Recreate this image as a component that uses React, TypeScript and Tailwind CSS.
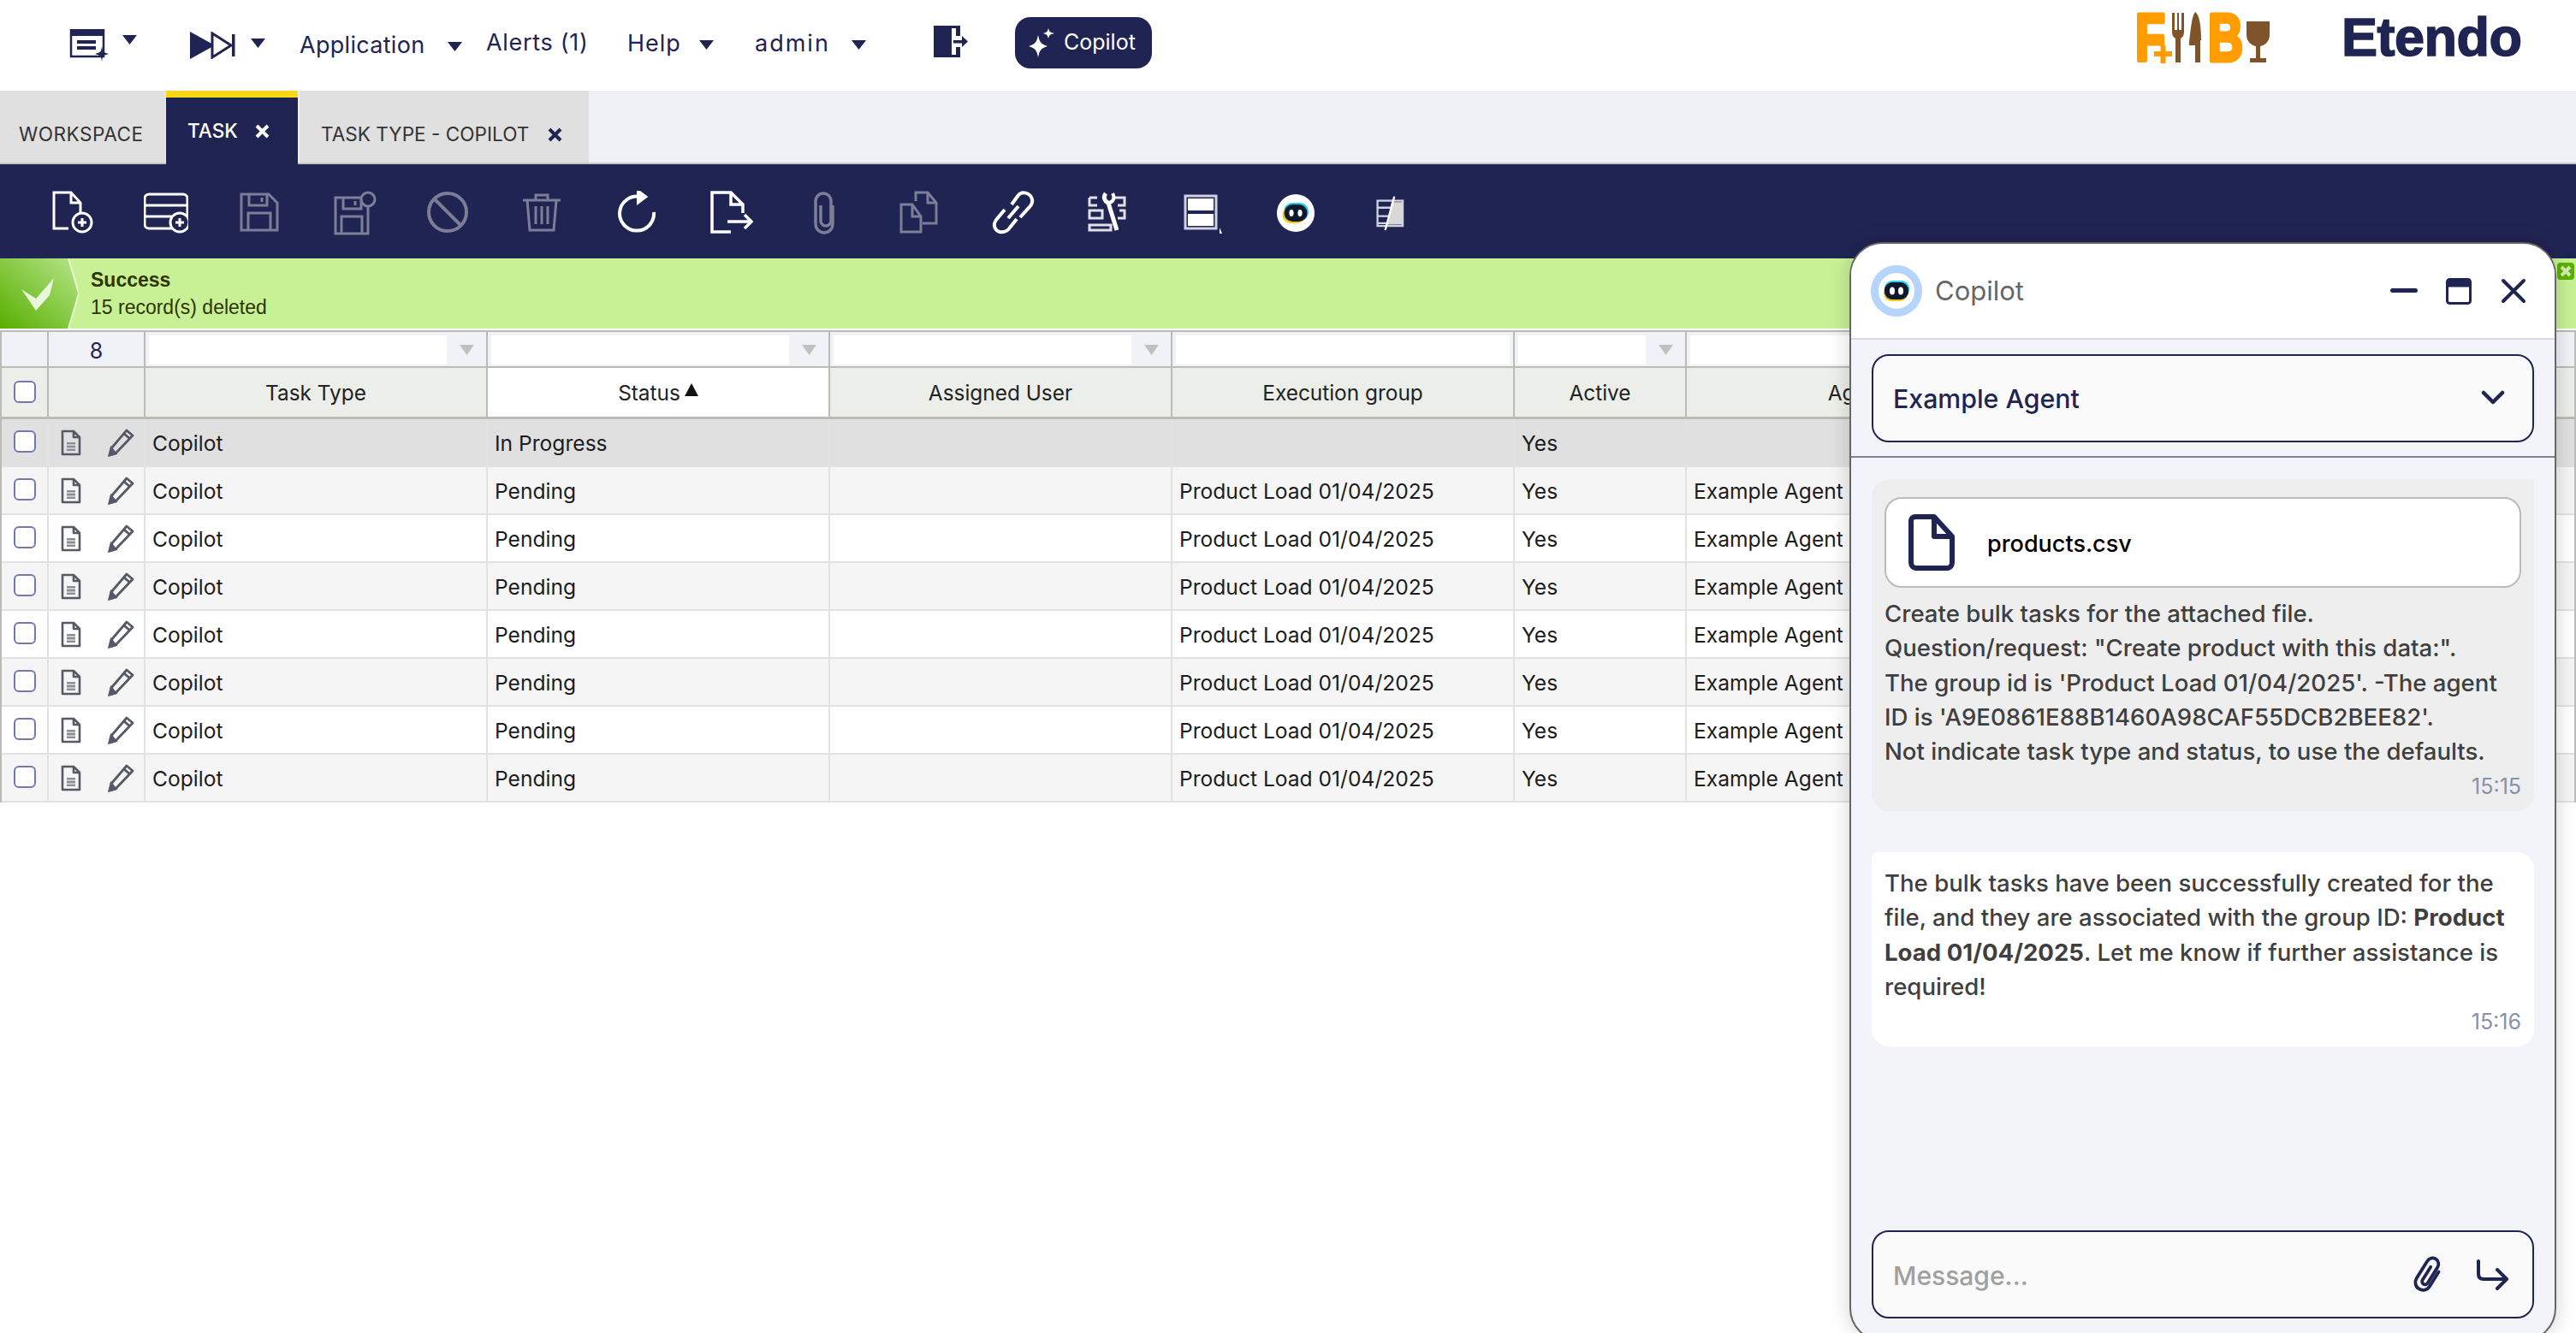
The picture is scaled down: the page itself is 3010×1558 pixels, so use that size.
import React from "react";

const Tri = ({ className = "" }: { className?: string }) => (
  <svg width="17" height="11" viewBox="0 0 17 11" className={className}>
    <path d="M0 0H17L8.5 11Z" fill="#202452" />
  </svg>
);

const Robot = ({ size }: { size: number }) => (
  <svg width={size} height={size} viewBox="0 0 44 44">
    <circle cx="22" cy="22" r="22" fill="#fff" />
    <rect x="8" y="10" width="29" height="21" rx="10" fill="#1fc8ea" />
    <rect x="6.5" y="14" width="27" height="20" rx="10" fill="#f5c518" />
    <rect x="8.5" y="12" width="27" height="20" rx="10" fill="#10182b" />
    <ellipse cx="17" cy="22" rx="2.6" ry="4" fill="#fff" />
    <ellipse cx="27" cy="22" rx="2.6" ry="4" fill="#fff" />
  </svg>
);

const Circ = ({ x, y, r = 11 }: { x: number; y: number; r?: number }) => (
  <g>
    <circle cx={x} cy={y} r={r} fill="#202452" />
    <path d={`M${x} ${y - 5}V${y + 5}M${x - 5} ${y}H${x + 5}`} />
  </g>
);

const toolbar: { dim?: boolean; el: React.ReactNode }[] = [
  { el: <g><path d="M22 44H5V2H25L36 14V26M25 2V14H36" /><Circ x={38} y={37} /></g> },
  { el: <g><rect x="1" y="4" width="50" height="40" rx="5" /><path d="M1 17H51M1 30H51" /><Circ x={42} y={37} /></g> },
  { dim: true, el: <g><path d="M4 4H36L46 14V46H4ZM13 4V17H34V4M28 8V13M12 46V26H38V46" /></g> },
  { dim: true, el: <g><path d="M4 8H36L42 14V50H4ZM13 8V21H34V8M27 12V17M11 50V30H35V50" /><circle cx="42" cy="10" r="8" fill="#202452" /></g> },
  { dim: true, el: <g strokeWidth={4}><circle cx="25" cy="25" r="22" /><path d="M10 10L40 40" /></g> },
  { dim: true, el: <g><path d="M3 11H47M18 11V5H32V11M8 11L11 46H39L42 11M18 18V39M25 18V39M32 18V39" /></g> },
  { el: <g strokeWidth={4}><path d="M30 7A20 20 0 1 0 46 25" /><path d="M28 1L36 7L28 13Z" fill="#fff" /></g> },
  { el: <g strokeWidth={3.5}><path d="M26 48H4V2H26L40 16V26M26 2V16H40" /><path d="M22 36H50M42 28L50 36L42 44" /></g> },
  { dim: true, el: <g strokeWidth={3.5}><path d="M36 16V38A10 10 0 0 1 16 38V11A8 8 0 0 1 34 11V34A5 5 0 0 1 22 34V16" transform="translate(-1 1)" /></g> },
  { dim: true, el: <g><path d="M18 16H5V48H28V30L18 16ZM18 16V30H28" /><path d="M22 12V2H36L46 14V38H30M36 2V14H46" /></g> },
  { el: <g strokeWidth={4}><path d="M24 16L32 5C36 0 46 2 48 10C49 14 46 18 44 20L34 31" /><path d="M16 22L6 34C2 40 4 46 10 48C16 49 20 46 22 43L30 33" /><path d="M20 32L32 18" /></g> },
  { el: <g stroke="#dfe0ea"><path d="M5 8H14M5 8V17H14M5 23H20V32H5ZM5 40H30V46H5ZM34 8H46V17H38M40 23H46V32H38" /><path d="M24 3C20 8 24 13 27 14L37 46" strokeWidth={5} stroke="#fff" /><path d="M32 3C35 8 33 13 28 14" strokeWidth={4} stroke="#fff" /></g> },
  { el: <g><rect x="7" y="6" width="36" height="38" stroke="#d0d2e0" strokeWidth={3} /><rect x="10" y="9" width="30" height="14" fill="#fff" stroke="none" /><rect x="10" y="27" width="30" height="14" fill="#fff" stroke="none" /><path d="M47 50V43L50 50Z" fill="#fff" stroke="none" /></g> },
  { el: null },
  { el: <g transform="translate(5 5) scale(0.82)" strokeWidth={2.8} stroke="#d0d2e0"><rect x="8" y="8" width="36" height="36" /><path d="M8 18H44M8 30H44M8 40H28" /><path d="M28 10H44V42H22Z" fill="#d8d8d8" stroke="none" /><path d="M32 2L19 50" stroke="#fff" strokeWidth={2.8} /></g> },
];

const cols = "grid grid-cols-[55px_113px_400px_400px_400px_400px_201px_400px_1fr]";

const FilterCell = ({ arrow }: { arrow?: boolean }) => (
  <div className="flex items-center border-r-2 border-[#bcbcb6] pl-[4px]">
    <div className="h-[34px] flex-1 bg-white" />
    {arrow ? (
      <div className="flex w-[46px] justify-center">
        <svg width="17" height="12" viewBox="0 0 17 12"><path d="M0 0H17L8.5 12Z" fill="#c0c0c0" /></svg>
      </div>
    ) : (
      <div className="w-[4px]" />
    )}
  </div>
);

const Head = ({ label, sorted }: { label: string; sorted?: boolean }) => (
  <div className={`flex items-center justify-center border-r-2 border-[#bcbcb6] pt-[2px] text-[24.4px] text-[#222] ${sorted ? "bg-white" : "bg-[#eceee9]"}`}>
    <span>{label}</span>
    {sorted && (
      <svg width="16" height="15" viewBox="0 0 16 15" className="mb-[8px] ml-[5px]"><path d="M8 0L16 15H0Z" fill="#111" /></svg>
    )}
  </div>
);

const Check = () => (
  <div className="h-[26px] w-[26px] rounded-[6px] border-2 border-[#7478b0] bg-white" />
);

const Row = ({ status, group, agent, bg }: { status: string; group: string; agent: string; bg: string }) => (
  <div className={`${cols} h-[56px] border-b-2 border-[#e2e2e2] text-[24.6px] text-[#1c1c1c] ${bg}`}>
    <div className="flex items-center justify-center border-r-2 border-[#e2e2e2] pb-[2px]"><Check /></div>
    <div className="flex items-center gap-[31px] border-r-2 border-[#e2e2e2] pl-[14px]">
      <svg width="24" height="31" viewBox="0 0 24 31" fill="none" stroke="#555a66" strokeWidth="2.6" strokeLinejoin="round">
        <path d="M2 2H15L22 9V29H2ZM15 2V9H22" />
        <path d="M7 15H17V25H7Z" fill="#8a8d98" stroke="none" />
        <path d="M7 18H17M7 22H17" stroke="#fff" strokeWidth="1" />
      </svg>
      <svg width="31" height="33" viewBox="0 0 31 33" fill="none" stroke="#555a66" strokeWidth="2.8">
        <path d="M22 2L29 8L9 29L2 31L4 23ZM19 6L26 12" strokeLinejoin="round" />
        <path d="M4 23L9 29L2 31Z" fill="#555a66" />
      </svg>
    </div>
    <div className="flex items-center border-r-2 border-[#e2e2e2] pt-[2px] pl-[8px]">Copilot</div>
    <div className="flex items-center border-r-2 border-[#e2e2e2] pt-[2px] pl-[8px]">{status}</div>
    <div className="border-r-2 border-[#e2e2e2]" />
    <div className="flex items-center border-r-2 border-[#e2e2e2] pt-[2px] pl-[8px]">{group}</div>
    <div className="flex items-center border-r-2 border-[#e2e2e2] pt-[2px] pl-[8px]">Yes</div>
    <div className="flex items-center border-r-2 border-[#e2e2e2] pt-[2px] pl-[8px]">{agent}</div>
    <div />
  </div>
);

const Avatar = () => (
  <div className="flex h-[60px] w-[60px] items-center justify-center rounded-full border-[9px] border-[#b5d4fe] bg-white">
    <svg width="30" height="24" viewBox="0 0 30 24">
      <rect x="1" y="0" width="29" height="20" rx="9" fill="#22d3ee" />
      <rect x="0" y="4" width="28" height="20" rx="9" fill="#f5c518" />
      <rect x="1" y="2" width="28" height="20" rx="9" fill="#10182b" />
      <ellipse cx="10" cy="12" rx="3" ry="4.5" fill="#fff" />
      <ellipse cx="20" cy="12" rx="3" ry="4.5" fill="#fff" />
    </svg>
  </div>
);

export default function App() {
  const pending = Array.from({ length: 7 });
  return (
    <div className="relative h-[1558px] w-[3010px] overflow-hidden bg-white font-['Inter',sans-serif]">
      {/* top bar */}
      <div className="flex h-[106px] items-center text-[27px] text-[#202452]">
        <svg width="46" height="38" viewBox="0 0 46 38" className="ml-[81px]">
          <path d="M2 1H40V32H2Z" fill="#fff" stroke="#202452" strokeWidth="2.5" />
          <rect x="1" y="0" width="40" height="8" fill="#202452" />
          <path d="M9 15H31M9 22H31" stroke="#202452" strokeWidth="4" />
          <path d="M38 20C39 27 39 27 46 29C39 31 39 31 38 38C37 31 37 31 30 29C37 27 37 27 38 20Z" fill="#202452" />
        </svg>
        <Tri className="-mt-[14px] ml-[16px]" />
        <svg width="53" height="32" viewBox="0 0 53 32" className="ml-[62px]">
          <path d="M0 0L29 16L0 32Z" fill="#202452" />
          <path d="M26 2L48 16L26 30Z" fill="#fff" stroke="#202452" strokeWidth="3" />
          <rect x="49" y="3" width="3.5" height="26" fill="#202452" />
        </svg>
        <Tri className="-mt-[6px] ml-[18px]" />
        <span className="ml-[40px] w-[146px] tracking-[0.3px]">Application</span>
        <Tri className="mt-[2px] ml-[27px]" />
        <span className="-mt-[5px] ml-[28px] w-[119px] whitespace-nowrap tracking-[0.7px]">Alerts (1)</span>
        <span className="-mt-[4px] ml-[46px] w-[62px] tracking-[1px]">Help</span>
        <Tri className="-mt-[2px] ml-[22px]" />
        <span className="-mt-[4px] ml-[48px] w-[91px] tracking-[2px]">admin</span>
        <Tri className="-mt-[2px] ml-[22px]" />
        <svg width="40" height="38" viewBox="0 0 40 38" className="-mt-[8px] ml-[79px]">
          <rect x="0" y="0" width="21" height="37" fill="#202452" />
          <rect x="0" y="0" width="31" height="3" fill="#202452" />
          <rect x="0" y="34" width="31" height="3" fill="#202452" />
          <rect x="26" y="0" width="5" height="12" fill="#202452" />
          <rect x="26" y="25" width="5" height="12" fill="#202452" />
          <rect x="21" y="16" width="12" height="5" fill="#fff" />
          <rect x="23" y="17" width="10" height="3.5" fill="#202452" />
          <path d="M33 12L40 18.5L33 25Z" fill="#202452" />
        </svg>
        <div className="-mt-[6px] ml-[55px] flex h-[60px] w-[160px] items-center rounded-[18px] bg-[#202452] pl-[16px] text-[25px] text-white">
          <svg width="30" height="34" viewBox="0 0 30 34" className="shrink-0">
            <path d="M11 8C13 17 14 18 22 21C14 24 13 25 11 34C9 25 8 24 0 21C8 18 9 17 11 8Z" fill="#fff" />
            <path d="M23 0C24 4 25 5 30 6C25 7 24 8 23 12C22 8 21 7 17 6C21 5 22 4 23 0Z" fill="#fff" />
          </svg>
          <span className="ml-[11px]">Copilot</span>
        </div>
        <svg width="160" height="100" viewBox="0 -13 160 100" className="mt-[-6px] ml-[1148px]">
          <text x="1" y="58" fontFamily="Liberation Sans" fontWeight="700" fontSize="78" fill="#ff9d00" stroke="#ff9d00" strokeWidth="5" strokeLinejoin="round" textLength="35" lengthAdjust="spacingAndGlyphs">F</text>
          <path d="M23 50H44M33.5 40V61" stroke="#ff9d00" strokeWidth="6" />
          <path d="M44 2H47V22H50V2H52V22H55V2H58V24C58 30 55 31 54 32V60H48V32C47 31 44 30 44 24Z" fill="#80542a" />
          <path d="M71 1C75 3 78 14 78 34H77V60H71V40H64V36C66 20 67 6 71 1Z" fill="#80542a" />
          <text x="86" y="58" fontFamily="Liberation Sans" fontWeight="700" fontSize="78" fill="#ff9d00" stroke="#ff9d00" strokeWidth="5" strokeLinejoin="round" textLength="41" lengthAdjust="spacingAndGlyphs">B</text>
          <path d="M131 12H158V28C158 36 152 40 147 41V55H154V60H135V55H142V41C137 40 131 36 131 28Z" fill="#80542a" />
        </svg>
        <span className="mt-[-20px] ml-[82px] font-['Liberation_Sans',sans-serif] text-[63px] font-bold tracking-[-0.5px] [-webkit-text-stroke:1.5px_#202452]">Etendo</span>
      </div>

      {/* tabs */}
      <div className="flex h-[86px] border-b-2 border-[#c4c4ca] bg-[#eff0f5] text-[22.6px]">
        <div className="flex w-[193px] items-center bg-[#e0e0e0] pt-[18px] pl-[22px] tracking-[0.5px] text-[#333]">WORKSPACE</div>
        <div className="ml-[1px] flex h-[86px] w-[154px] items-center border-t-[8px] border-[#fdd615] bg-[#202452] pl-[25px] text-white">
          <span className="w-[57px] font-medium">TASK</span>
          <svg width="17" height="17" viewBox="0 0 17 17" className="ml-[22px]"><path d="M2 2L15 15M15 2L2 15" stroke="#fff" strokeWidth="4" /></svg>
        </div>
        <div className="ml-[2px] flex w-[338px] items-center bg-[#e0e0e0] pt-[18px] pl-[25px] whitespace-nowrap text-[#333]">
          <span className="w-[242px]">TASK TYPE - COPILOT</span>
          <svg width="17" height="17" viewBox="0 0 17 17" className="ml-[23px]"><path d="M2 2L15 15M15 2L2 15" stroke="#202452" strokeWidth="4" /></svg>
        </div>
      </div>

      {/* toolbar */}
      <div className="flex h-[110px] items-center bg-[#202452] pt-[4px] pl-[29px]">
        {toolbar.map((t, i) => (
          <div key={i} className="flex w-[110px] justify-center">
            {t.el ? (
              <svg width="52" height="52" viewBox="0 0 52 52" fill="none" strokeWidth="3" stroke={t.dim ? "#7b7e96" : "#fff"}>
                {t.el}
              </svg>
            ) : (
              <Robot size={44} />
            )}
          </div>
        ))}
      </div>

      {/* message */}
      <div className="flex h-[82px] items-stretch bg-[#c8f196]">
        <svg width="92" height="82" viewBox="0 0 92 82" className="shrink-0">
          <defs>
            <linearGradient id="g" x1="0" y1="1" x2="1" y2="0">
              <stop offset="0" stopColor="#58ae00" />
              <stop offset="1" stopColor="#b6e58a" />
            </linearGradient>
          </defs>
          <path d="M0 0H80L92 41L80 82H0Z" fill="url(#g)" />
          <path d="M80 0L92 41L80 82" fill="none" stroke="#e6f7d0" strokeWidth="2" />
          <path d="M25 36L42 47L63 23L58 43L42 61Z" fill="#e9f8da" />
        </svg>
        <div className="ml-[14px] flex flex-col justify-center font-['Liberation_Sans',sans-serif] text-[23px] leading-[32px] text-[#2e3300]">
          <span className="font-bold">Success</span>
          <span>15 record(s) deleted</span>
        </div>
        <div className="ml-auto pt-[5px] pr-[2px]">
          <div className="flex h-[20px] w-[20px] items-center justify-center rounded-[4px] bg-[#5cb000]">
            <svg width="14" height="14" viewBox="0 0 14 14"><path d="M2 2L12 12M12 2L2 12" stroke="#cfeeb0" strokeWidth="4" /></svg>
          </div>
        </div>
      </div>

      {/* grid */}
      <div className="mt-[2px] border-t-2 border-r-2 border-l-2 border-[#bcbcb6]">
        <div className={`${cols} h-[42px] border-b-2 border-[#bcbcb6] bg-[#f1f2f8]`}>
          <div className="border-r-2 border-[#bcbcb6]" />
          <div className="flex items-center justify-center border-r-2 border-[#bcbcb6] pt-[4px] text-[25px] text-[#202452]">8</div>
          <FilterCell arrow />
          <FilterCell arrow />
          <FilterCell arrow />
          <FilterCell />
          <FilterCell arrow />
          <FilterCell />
          <div />
        </div>
        <div className={`${cols} h-[60px] border-b-[3px] border-[#bcbcb6] bg-[#eceee9]`}>
          <div className="flex items-center justify-center border-r-2 border-[#bcbcb6] pb-[2px]"><Check /></div>
          <div className="border-r-2 border-[#bcbcb6]" />
          <Head label="Task Type" />
          <Head label="Status" sorted />
          <Head label="Assigned User" />
          <Head label="Execution group" />
          <Head label="Active" />
          <Head label="Agent" />
          <div />
        </div>
        <Row status="In Progress" group="" agent="" bg="bg-[#e0e0e0]" />
        {pending.map((_, i) => (
          <Row key={i} status="Pending" group="Product Load 01/04/2025" agent="Example Agent" bg={i % 2 === 0 ? "bg-[#f5f5f5]" : "bg-white"} />
        ))}
      </div>

      {/* copilot panel */}
      <div className="absolute top-[283px] left-[2161px] flex h-[1285px] w-[826px] flex-col overflow-hidden rounded-[39px] border-2 border-[#666] bg-[#f3f4f9] shadow-[0_0_24px_rgba(0,0,0,0.18)]">
        <div className="flex h-[112px] shrink-0 items-center border-b-2 border-[#d6d8e4] bg-white pl-[23px]">
          <Avatar />
          <span className="ml-[15px] text-[31px] text-[#666]">Copilot</span>
          <svg width="32" height="6" viewBox="0 0 32 6" className="ml-[auto]"><rect width="32" height="5" rx="2.5" fill="#202452" /></svg>
          <svg width="30" height="31" viewBox="0 0 30 31" className="ml-[33px]">
            <rect x="1.5" y="1.5" width="27" height="28" rx="3" fill="#fff" stroke="#202452" strokeWidth="3" />
            <rect x="1.5" y="1.5" width="27" height="9" fill="#202452" />
          </svg>
          <svg width="30" height="30" viewBox="0 0 30 30" className="mr-[33px] ml-[34px]"><path d="M3 3L27 27M27 3L3 27" stroke="#202452" strokeWidth="4" strokeLinecap="round" /></svg>
        </div>
        <div className="flex h-[138px] shrink-0 items-center border-b-2 border-[#7f8494] pr-[24px] pl-[24px]">
          <div className="flex h-[103px] w-full items-center justify-between rounded-[20px] border-2 border-[#202452] bg-[#fafafa] pr-[32px] pl-[23px]">
            <span className="pt-[3px] text-[30.3px] font-medium text-[#202452]">Example Agent</span>
            <svg width="28" height="18" viewBox="0 0 28 18"><path d="M3 3L14 14L25 3" fill="none" stroke="#202452" strokeWidth="4.5" strokeLinecap="round" strokeLinejoin="round" /></svg>
          </div>
        </div>
        <div className="flex flex-1 flex-col px-[24px] pt-[25px]">
          <div className="h-[388px] rounded-[20px] rounded-tr-none bg-[#eeeeee] px-[15px] pt-[21px] text-[27.6px] leading-[40.3px] font-medium text-[#3f3f3f]">
            <div className="mb-[10px] flex h-[106px] items-center rounded-[20px] border-2 border-[#bbb] bg-white pl-[26px] text-black">
              <svg width="54" height="66" viewBox="0 0 54 66" fill="none" stroke="#202452" strokeWidth="6" strokeLinejoin="round">
                <path d="M8 3H30L51 26V56C51 60 49 63 45 63H9C5 63 3 60 3 56V8C3 5 5 3 8 3Z" />
                <path d="M30 3V26H51" />
              </svg>
              <span className="ml-[38px] pt-[4px] text-[27px]">products.csv</span>
            </div>
            <p>Create bulk tasks for the attached file.</p>
            <p>Question/request: "Create product with this data:".</p>
            <p>The group id is 'Product Load 01/04/2025'. -The agent ID is 'A9E0861E88B1460A98CAF55DCB2BEE82'.</p>
            <p>Not indicate task type and status, to use the defaults.</p>
            <div className="mt-[1px] text-right text-[25px] leading-[40px] font-normal text-[#8a90a8]">15:15</div>
          </div>
          <div className="mt-[48px] h-[227px] rounded-[20px] rounded-tl-[8px] bg-white px-[15px] pt-[16px] text-[27.6px] leading-[40.3px] font-medium text-[#3f3f3f]">
            <p>The bulk tasks have been successfully created for the file, and they are associated with the group ID: <b className="font-bold">Product Load 01/04/2025</b>. Let me know if further assistance is required!</p>
            <div className="mt-[1px] text-right text-[25px] leading-[40px] font-normal text-[#8a90a8]">15:16</div>
          </div>
          <div className="mt-auto mb-[25px] flex h-[103px] shrink-0 items-center rounded-[20px] border-2 border-[#202452] bg-[#fafafa] pr-[28px] pl-[23px]">
            <span className="pt-[3px] text-[30px] font-medium text-[#a0a0a0]">Message...</span>
            <svg width="46" height="46" viewBox="0 0 46 46" fill="none" stroke="#202452" strokeWidth="3.8" strokeLinecap="round" className="ml-auto">
              <g transform="rotate(32 23 23)">
                <path d="M31 14V34A9 9 0 0 1 13 34V10A7 7 0 0 1 27 10V32A3.5 3.5 0 0 1 20 32V14" />
              </g>
            </svg>
            <svg width="38" height="36" viewBox="0 0 38 36" fill="none" stroke="#202452" strokeWidth="4" strokeLinecap="round" strokeLinejoin="round" className="ml-[32px]">
              <path d="M3 2V17C3 21 5 23 9 23H35M25 12L36 23L25 34" />
            </svg>
          </div>
        </div>
      </div>
    </div>
  );
}
